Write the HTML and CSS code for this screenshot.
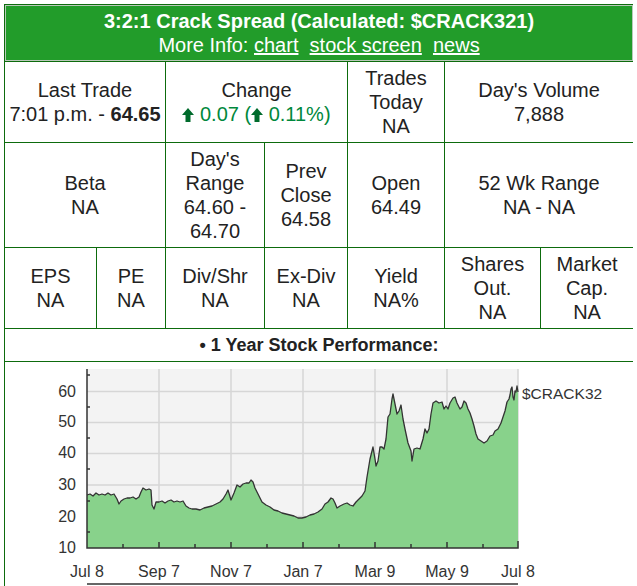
FILE: index.html
```html
<!DOCTYPE html>
<html lang="en">
<head>
    <meta charset="UTF-8">
    <title>3:2:1 Crack Spread - Quote</title>
    <link rel="stylesheet" href="styles.css">
</head>
<body>
    <table class="quote">
        <colgroup>
            <col class="c-a"><col class="c-b"><col class="c-c"><col class="c-d">
            <col class="c-e"><col class="c-f"><col class="c-g">
        </colgroup>
        <tr>
            <th colspan="7" class="title">
                3:2:1 Crack Spread (Calculated: $CRACK321)<br>
                <span class="more">More Info: <a href="#">chart</a>&nbsp; <a href="#">stock screen</a>&nbsp; <a href="#">news</a></span>
            </th>
        </tr>
        <tr>
            <td colspan="2">Last Trade<br>7:01 p.m. - <b>64.65</b></td>
            <td colspan="2">Change<br>
                <span class="up"><svg class="arrow" viewBox="0 0 12 14"><path d="M6 0 L12 7 L8.5 7 L8.5 14 L3.5 14 L3.5 7 L0 7 Z"/></svg> 0.07 (<svg class="arrow" viewBox="0 0 12 14"><path d="M6 0 L12 7 L8.5 7 L8.5 14 L3.5 14 L3.5 7 L0 7 Z"/></svg> 0.11%)</span>
            </td>
            <td>Trades Today<br>NA</td>
            <td colspan="2">Day's Volume<br>7,888</td>
        </tr>
        <tr>
            <td colspan="2">Beta<br>NA</td>
            <td>Day's Range<br>64.60 - 64.70</td>
            <td>Prev Close<br>64.58</td>
            <td>Open<br>64.49</td>
            <td colspan="2">52 Wk Range<br>NA - NA</td>
        </tr>
        <tr>
            <td>EPS<br>NA</td>
            <td>PE<br>NA</td>
            <td>Div/Shr<br>NA</td>
            <td>Ex-Div<br>NA</td>
            <td>Yield<br>NA%</td>
            <td>Shares Out.<br>NA</td>
            <td>Market Cap.<br>NA</td>
        </tr>
        <tr>
            <td colspan="7" class="perf">&bull; 1 Year Stock Performance:</td>
        </tr>
        <tr>
            <td colspan="7" class="chart-cell">
                <svg class="chart" width="627" height="224" viewBox="5 363 627 224">
                    <!-- plot area and grid -->
                    <rect x="87" y="370" width="431" height="179" fill="#f3f3f3"/>
                    <g stroke="#d6d6d6" stroke-width="1.5">
                        <line x1="87" y1="392.5" x2="518" y2="392.5"/>
                        <line x1="87" y1="423.5" x2="518" y2="423.5"/>
                        <line x1="87" y1="454.5" x2="518" y2="454.5"/>
                        <line x1="87" y1="486" x2="518" y2="486"/>
                        <line x1="87" y1="517.5" x2="518" y2="517.5"/>
                        <line x1="159" y1="370" x2="159" y2="549"/>
                        <line x1="231" y1="370" x2="231" y2="549"/>
                        <line x1="303" y1="370" x2="303" y2="549"/>
                        <line x1="375" y1="370" x2="375" y2="549"/>
                        <line x1="447" y1="370" x2="447" y2="549"/>
                        <line x1="518" y1="370" x2="518" y2="549"/>
                    </g>
                    <!-- price area -->
                    <polygon fill="#88d28b" points="87,549 87,496 90,495 93,497 96,494 99,496 102,495 105,496 108,494 111,496 114,495 117,500 119,505 121,502 124,500 127,499 130,499 133,498 136,500 139,498 141,493 143,489 146,491 149,490 151,491 152,506 154,510 156,503 159,503 162,502 165,504 168,502 171,501 174,503 177,502 180,503 183,502 186,507 189,509 192,510 196,510 200,511 204,509 208,508 212,507 216,505 220,503 223,500 226,495 228,491 231,501 234,494 237,486 240,488 243,485 246,484 249,484 251,481 253,483 255,489 258,495 262,503 266,506 270,508 274,511 278,512 282,514 286,515 290,516 294,517 298,519 302,519 306,518 310,516 314,515 318,513 322,510 325,505 328,503 331,499 333,500 335,504 337,509 340,507 344,505 347,504 350,506 353,507 356,503 359,500 362,497 365,492 367,478 369,466 370,460 372,452 373,448 375,460 376,467 378,462 380,448 382,448 384,450 386,440 388,418 390,415 392,400 393,395 395,405 397,415 399,412 401,406 403,420 405,430 408,444 411,452 412,462 414,450 417,449 420,450 423,440 425,430 427,434 429,430 431,415 433,404 436,402 439,404 442,403 444,410 446,407 448,410 450,404 453,399 455,398 457,404 460,410 462,408 464,402 466,404 468,410 470,414 472,420 474,427 476,435 478,440 481,442 484,444 487,442 490,437 493,436 495,432 498,430 501,424 503,418 505,412 507,403 509,400 510,396 511,390 512,388 513,398 514,401 515,392 516,393 517,387 518,393 518,549"/>
                    <polyline fill="none" stroke="#333" stroke-width="1.3" stroke-linejoin="round" points="87,496 90,495 93,497 96,494 99,496 102,495 105,496 108,494 111,496 114,495 117,500 119,505 121,502 124,500 127,499 130,499 133,498 136,500 139,498 141,493 143,489 146,491 149,490 151,491 152,506 154,510 156,503 159,503 162,502 165,504 168,502 171,501 174,503 177,502 180,503 183,502 186,507 189,509 192,510 196,510 200,511 204,509 208,508 212,507 216,505 220,503 223,500 226,495 228,491 231,501 234,494 237,486 240,488 243,485 246,484 249,484 251,481 253,483 255,489 258,495 262,503 266,506 270,508 274,511 278,512 282,514 286,515 290,516 294,517 298,519 302,519 306,518 310,516 314,515 318,513 322,510 325,505 328,503 331,499 333,500 335,504 337,509 340,507 344,505 347,504 350,506 353,507 356,503 359,500 362,497 365,492 367,478 369,466 370,460 372,452 373,448 375,460 376,467 378,462 380,448 382,448 384,450 386,440 388,418 390,415 392,400 393,395 395,405 397,415 399,412 401,406 403,420 405,430 408,444 411,452 412,462 414,450 417,449 420,450 423,440 425,430 427,434 429,430 431,415 433,404 436,402 439,404 442,403 444,410 446,407 448,410 450,404 453,399 455,398 457,404 460,410 462,408 464,402 466,404 468,410 470,414 472,420 474,427 476,435 478,440 481,442 484,444 487,442 490,437 493,436 495,432 498,430 501,424 503,418 505,412 507,403 509,400 510,396 511,390 512,388 513,398 514,401 515,392 516,393 517,387 518,393"/>
                    <!-- axes and ticks -->
                    <g stroke="#333" stroke-width="1.5" fill="none">
                        <polyline points="87,370 87,549 518,549 518,542"/>
                        <line x1="87" y1="376" x2="90" y2="376"/>
                        <line x1="87" y1="408" x2="90" y2="408"/>
                        <line x1="87" y1="439" x2="90" y2="439"/>
                        <line x1="87" y1="470" x2="90" y2="470"/>
                        <line x1="87" y1="502" x2="90" y2="502"/>
                        <line x1="87" y1="533" x2="90" y2="533"/>
                        <line x1="123" y1="549" x2="123" y2="545"/>
                        <line x1="159" y1="549" x2="159" y2="543"/>
                        <line x1="195" y1="549" x2="195" y2="545"/>
                        <line x1="231" y1="549" x2="231" y2="543"/>
                        <line x1="267" y1="549" x2="267" y2="545"/>
                        <line x1="303" y1="549" x2="303" y2="543"/>
                        <line x1="339" y1="549" x2="339" y2="545"/>
                        <line x1="375" y1="549" x2="375" y2="543"/>
                        <line x1="411" y1="549" x2="411" y2="545"/>
                        <line x1="447" y1="549" x2="447" y2="543"/>
                        <line x1="483" y1="549" x2="483" y2="545"/>
                        <line x1="87" y1="585" x2="518" y2="585"/>
                    </g>
                    <g class="ylabels" text-anchor="end">
                        <text x="76" y="398">60</text>
                        <text x="76" y="428">50</text>
                        <text x="76" y="459">40</text>
                        <text x="76" y="491">30</text>
                        <text x="76" y="523">20</text>
                        <text x="76" y="554">10</text>
                    </g>
                    <g class="xlabels" text-anchor="middle">
                        <text x="87" y="578">Jul 8</text>
                        <text x="159" y="578">Sep 7</text>
                        <text x="231" y="578">Nov 7</text>
                        <text x="303" y="578">Jan 7</text>
                        <text x="375" y="578">Mar 9</text>
                        <text x="447" y="578">May 9</text>
                        <text x="518" y="578">Jul 8</text>
                    </g>
                    <text class="symbol" x="522" y="400">$CRACK32</text>
                </svg>
            </td>
        </tr>
    </table>
</body>
</html>
```

FILE: styles.css
```css
body {
    margin: 4px;
    background: white;
    font-family: "Liberation Sans", Arial, sans-serif;
    color: #222;
}
.quote {
    width: 629px;
    table-layout: fixed;
    border-collapse: collapse;
    font-size: 20px;
    line-height: 24px;
}
.c-a { width: 92px; }
.c-b { width: 69px; }
.c-c { width: 99px; }
.c-d { width: 83px; }
.c-e { width: 97px; }
.c-f { width: 96px; }
.c-g { width: 93px; }
.quote td,
.quote th {
    border: 1px solid #0d6b0d;
    padding: 4px 2px;
    text-align: center;
    vertical-align: middle;
}
.quote th.title {
    background: #229c2a;
    color: white;
    font-weight: bold;
    box-shadow: inset 0 0 0 1px #b9c9b9;
}
.title .more {
    font-weight: normal;
}
.title a {
    color: white;
    text-decoration: underline;
}
.up {
    color: #00883c;
}
.arrow {
    width: 12px;
    height: 14px;
    fill: #006b2c;
    vertical-align: -1px;
}
.quote td.perf {
    font-size: 18px;
    font-weight: bold;
}
.quote td.chart-cell {
    padding: 0;
    vertical-align: top;
}
.chart {
    display: block;
}
.chart text {
    font-family: "Liberation Sans", Arial, sans-serif;
    font-size: 16px;
    fill: #333;
}
.chart .symbol {
    font-size: 15.5px;
}
```
